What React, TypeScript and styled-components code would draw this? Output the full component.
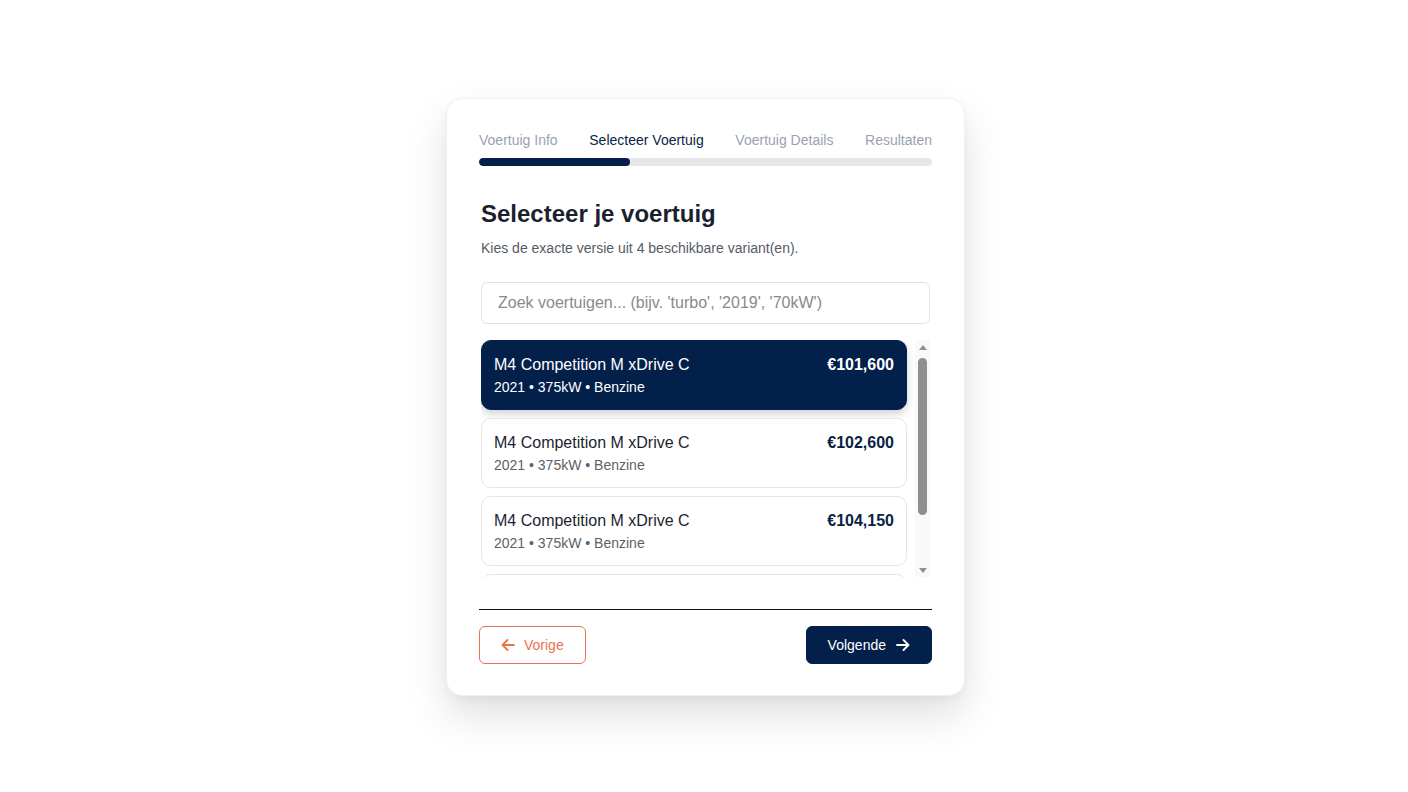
import React from 'react';
import styled, { createGlobalStyle } from 'styled-components';

const GlobalStyle = createGlobalStyle`
  html, body {
    margin: 0;
    padding: 0;
    background: #fff;
    font-family: 'Liberation Sans', Arial, sans-serif;
  }
  * { box-sizing: border-box; }
`

const Page = styled.div`
  display: flex;
  justify-content: center;
  padding-top: 98px;
  padding-left: 3px;
  height: 792px;
`

const Card = styled.div`
  width: 519px;
  height: 598px;
  padding: 32px 32px 0;
  background: #fff;
  border: 1px solid #f0f0f0;
  border-radius: 16px;
  box-shadow: 0 20px 40px rgba(0, 0, 0, 0.12), 0 4px 10px rgba(0, 0, 0, 0.04);
`

const Steps = styled.div`
  display: flex;
  justify-content: space-between;
  font-size: 14px;
  line-height: 18px;
`

const Step = styled.span<{ $active?: boolean }>`
  color: ${p => (p.$active ? '#0b1f44' : '#9aa2b1')};
`

const Track = styled.div`
  margin-top: 9px;
  height: 8px;
  border-radius: 4px;
  background: #e5e7eb;
  overflow: hidden;
`

const Fill = styled.div`
  height: 100%;
  background: #03204b;
  border-radius: 4px;
`

const Body = styled.div`
  padding: 0 2px;
`

const Heading = styled.h1`
  margin: 34px 0 0;
  font-size: 24px;
  line-height: 28px;
  font-weight: 700;
  color: #1c1f2e;
`

const Sub = styled.p`
  margin: 12px 0 0;
  font-size: 14px;
  line-height: 16px;
  color: #555b66;
`

const Search = styled.input`
  display: block;
  width: 100%;
  height: 42px;
  margin-top: 26px;
  padding: 0 16px;
  border: 1px solid #e2e2e2;
  border-radius: 6px;
  font-family: 'Liberation Sans', Arial, sans-serif;
  font-size: 16px;
  color: #222;
  outline: none;
  &::placeholder { color: #8a8a8a; }
`

const ListWrap = styled.div`
  margin-top: 16px;
  height: 237px;
  display: flex;
`

const List = styled.div`
  flex: 1;
  overflow: hidden;
  padding-right: 8px;
  display: flex;
  flex-direction: column;
  gap: 8px;
`

const ScrollTrack = styled.div`
  width: 15px;
  flex-shrink: 0;
  background: #f9f9f9;
  display: flex;
  flex-direction: column;
  align-items: center;
  padding: 5px 0 4px;
`

const ScrollArrow = styled.div<{ $down?: boolean }>`
  width: 0;
  height: 0;
  border-left: 4px solid transparent;
  border-right: 4px solid transparent;
  ${p => (p.$down ? 'border-top: 5px solid #8f8f8f;' : 'border-bottom: 5px solid #8f8f8f;')}
`

const ScrollThumb = styled.div`
  width: 9px;
  border-radius: 5px;
  background: #8f8f8f;
  margin: 8px 0 auto;
`

const Item = styled.div<{ $selected?: boolean }>`
  flex-shrink: 0;
  height: 70px;
  padding: 15px 12px 0;
  display: flex;
  justify-content: space-between;
  align-items: flex-start;
  border-radius: 10px;
  border: 1px solid ${p => (p.$selected ? '#03204b' : '#e5e5e5')};
  background: ${p => (p.$selected ? '#03204b' : '#fff')};
  box-shadow: ${p => (p.$selected ? '0 4px 8px rgba(0,0,0,0.18)' : 'none')};
  color: ${p => (p.$selected ? '#fff' : '#1c1f2e')};
`

const Name = styled.div`
  font-size: 16px;
  line-height: 18px;
`

const Meta = styled.div<{ $selected?: boolean }>`
  margin-top: 5px;
  font-size: 14px;
  line-height: 16px;
  color: ${p => (p.$selected ? '#fff' : '#5a5f69')};
`

const Price = styled.div<{ $selected?: boolean }>`
  font-size: 16px;
  line-height: 18px;
  font-weight: 700;
  color: ${p => (p.$selected ? '#fff' : '#0b1f44')};
`

const Divider = styled.hr`
  margin: 32px 0 0;
  border: none;
  border-top: 1px solid #111;
`

const Footer = styled.div`
  display: flex;
  justify-content: space-between;
  margin-top: 16px;
`

const Button = styled.button<{ $primary?: boolean }>`
  display: flex;
  align-items: center;
  gap: ${p => (p.$primary ? '10px' : '9px')};
  height: 38px;
  padding: 0 21px;
  border-radius: 6px;
  font-family: 'Liberation Sans', Arial, sans-serif;
  font-size: 14px;
  cursor: pointer;
  border: 1px solid ${p => (p.$primary ? '#03204b' : '#e8744e')};
  background: ${p => (p.$primary ? '#03204b' : '#fff')};
  color: ${p => (p.$primary ? '#fff' : '#e8744e')};
`

const Arrow: React.FC<{ dir: 'left' | 'right' }> = ({ dir }) => (
  <svg width="14" height="12" viewBox="0 0 14 12" fill="none" stroke="currentColor" strokeWidth="1.8" strokeLinecap="round" strokeLinejoin="round">
    {dir === 'left' ? (
      <path d="M13 6H1.5M6.5 1L1.5 6l5 5" />
    ) : (
      <path d="M1 6h11.5M7.5 1l5 5-5 5" />
    )}
  </svg>
)

const variants = [
  { name: 'M4 Competition M xDrive C', meta: '2021 • 375kW • Benzine', price: '€101,600' },
  { name: 'M4 Competition M xDrive C', meta: '2021 • 375kW • Benzine', price: '€102,600' },
  { name: 'M4 Competition M xDrive C', meta: '2021 • 375kW • Benzine', price: '€104,150' },
  { name: 'M4 Competition M xDrive C', meta: '2021 • 375kW • Benzine', price: '€105,900' },
]

const App: React.FC = () => {
  return (
    <Page>
      <GlobalStyle />
      <Card>
        <Steps>
          <Step>Voertuig Info</Step>
          <Step $active>Selecteer Voertuig</Step>
          <Step>Voertuig Details</Step>
          <Step>Resultaten</Step>
        </Steps>
        <Track>
          <Fill style={{ width: `${(1 / 3) * 100}%` }} />
        </Track>
        <Body>
          <Heading>Selecteer je voertuig</Heading>
          <Sub>Kies de exacte versie uit 4 beschikbare variant(en).</Sub>
          <Search placeholder="Zoek voertuigen... (bijv. 'turbo', '2019', '70kW')" />
          <ListWrap>
            <List>
              {variants.map((v, i) => (
                <Item key={i} $selected={i === 0}>
                  <div>
                    <Name>{v.name}</Name>
                    <Meta $selected={i === 0}>{v.meta}</Meta>
                  </div>
                  <Price $selected={i === 0}>{v.price}</Price>
                </Item>
              ))}
            </List>
            <ScrollTrack>
              <ScrollArrow />
              <ScrollThumb style={{ height: 157 }} />
              <ScrollArrow $down />
            </ScrollTrack>
          </ListWrap>
        </Body>
        <Divider />
        <Footer>
          <Button>
            <Arrow dir="left" />
            Vorige
          </Button>
          <Button $primary>
            Volgende
            <Arrow dir="right" />
          </Button>
        </Footer>
      </Card>
    </Page>
  )
}

export default App;
